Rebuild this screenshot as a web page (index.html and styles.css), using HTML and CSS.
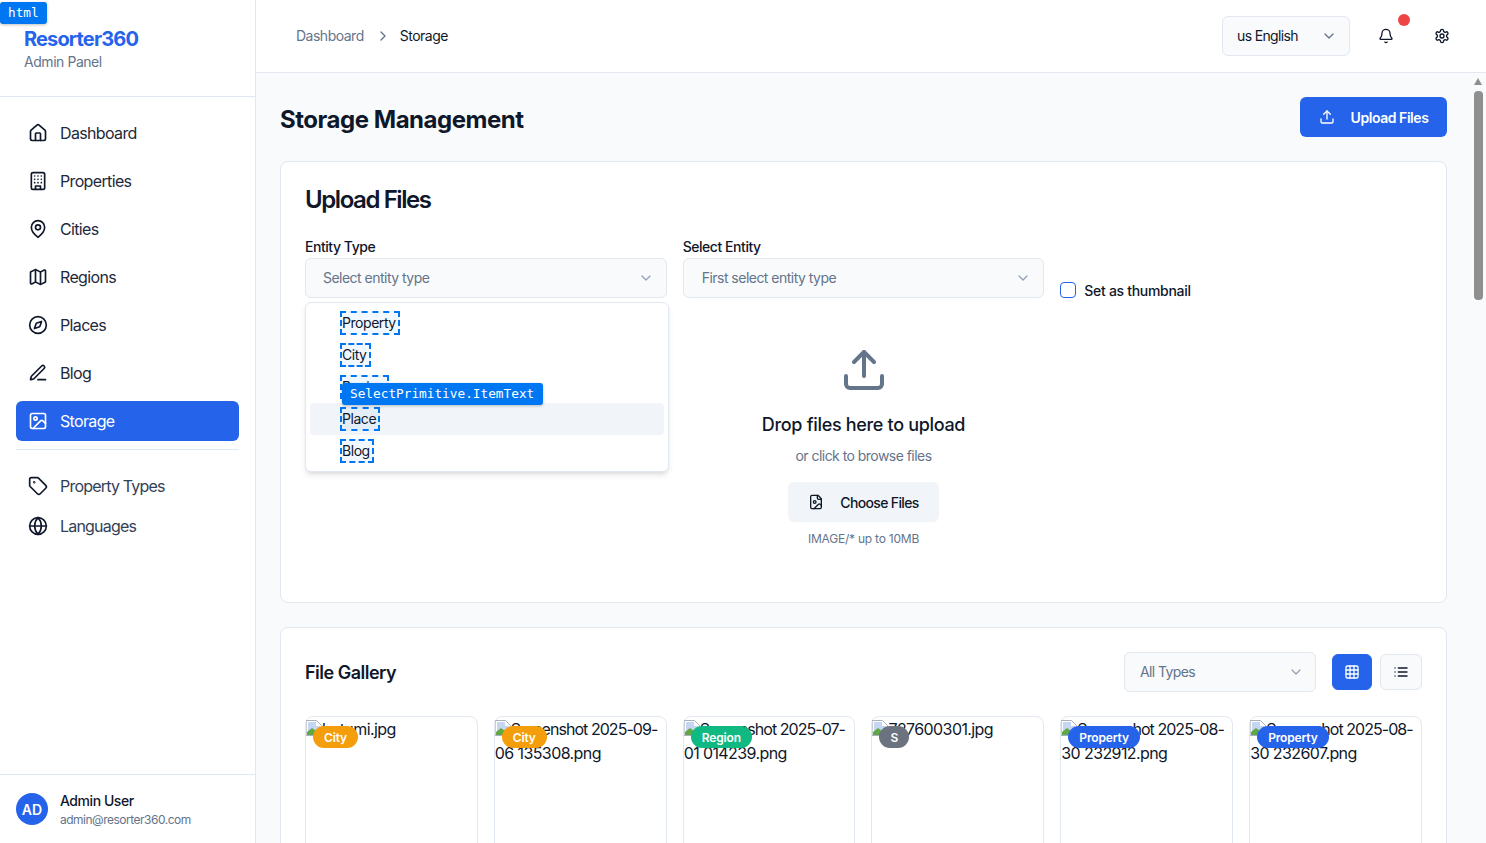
FILE: index.html
```html
<!DOCTYPE html>
<html lang="en">
<head>
    <meta charset="UTF-8">
    <meta name="viewport" content="width=device-width, initial-scale=1.0">
    <title>Storage Management</title>
    <link rel="stylesheet" href="styles.css">
</head>
<body>
    <aside class="sidebar">
        <div class="brand">
            <div class="brand-name">Resorter360</div>
            <div class="brand-sub">Admin Panel</div>
        </div>
        <nav class="nav">
            <a class="nav-item"><svg class="icon" viewBox="0 0 24 24"><path d="M15 21v-8a1 1 0 0 0-1-1h-4a1 1 0 0 0-1 1v8"/><path d="M3 10a2 2 0 0 1 .709-1.528l7-5.999a2 2 0 0 1 2.582 0l7 5.999A2 2 0 0 1 21 10v9a2 2 0 0 1-2 2H5a2 2 0 0 1-2-2z"/></svg>Dashboard</a>
            <a class="nav-item"><svg class="icon" viewBox="0 0 24 24"><rect width="16" height="20" x="4" y="2" rx="2" ry="2"/><path d="M9 22v-4h6v4"/><path d="M8 6h.01M16 6h.01M12 6h.01M12 10h.01M12 14h.01M16 10h.01M16 14h.01M8 10h.01M8 14h.01"/></svg>Properties</a>
            <a class="nav-item"><svg class="icon" viewBox="0 0 24 24"><path d="M20 10c0 6-8 12-8 12s-8-6-8-12a8 8 0 0 1 16 0Z"/><circle cx="12" cy="10" r="3"/></svg>Cities</a>
            <a class="nav-item"><svg class="icon" viewBox="0 0 24 24"><path d="M14.106 5.553a2 2 0 0 0 1.788 0l3.659-1.83A1 1 0 0 1 21 4.619v12.764a1 1 0 0 1-.553.894l-4.553 2.277a2 2 0 0 1-1.788 0l-4.212-2.106a2 2 0 0 0-1.788 0l-3.659 1.83A1 1 0 0 1 3 19.381V6.618a1 1 0 0 1 .553-.894l4.553-2.277a2 2 0 0 1 1.788 0z"/><path d="M15 5.764v15"/><path d="M9 3.236v15"/></svg>Regions</a>
            <a class="nav-item"><svg class="icon" viewBox="0 0 24 24"><path d="m16.24 7.76-1.804 5.411a2 2 0 0 1-1.265 1.265L7.76 16.24l1.804-5.411a2 2 0 0 1 1.265-1.265z"/><circle cx="12" cy="12" r="10"/></svg>Places</a>
            <a class="nav-item"><svg class="icon" viewBox="0 0 24 24"><path d="M12 20h9"/><path d="M16.376 3.622a1 1 0 0 1 3.002 3.002L7.368 18.635a2 2 0 0 1-.855.506l-2.872.838a.5.5 0 0 1-.62-.62l.838-2.872a2 2 0 0 1 .506-.854z"/></svg>Blog</a>
            <a class="nav-item active"><svg class="icon" viewBox="0 0 24 24"><rect width="18" height="18" x="3" y="3" rx="2" ry="2"/><circle cx="9" cy="9" r="2"/><path d="m21 15-3.086-3.086a2 2 0 0 0-2.828 0L6 21"/></svg>Storage</a>
            <div class="nav-divider"></div>
            <div class="nav-group">
                <a class="nav-item muted"><svg class="icon" viewBox="0 0 24 24"><path d="M12.586 2.586A2 2 0 0 0 11.172 2H4a2 2 0 0 0-2 2v7.172a2 2 0 0 0 .586 1.414l8.704 8.704a2.426 2.426 0 0 0 3.42 0l6.58-6.58a2.426 2.426 0 0 0 0-3.42z"/><circle cx="7.5" cy="7.5" r=".5"/></svg>Property Types</a>
                <a class="nav-item muted"><svg class="icon" viewBox="0 0 24 24"><circle cx="12" cy="12" r="10"/><path d="M12 2a14.5 14.5 0 0 0 0 20 14.5 14.5 0 0 0 0-20"/><path d="M2 12h20"/></svg>Languages</a>
            </div>
        </nav>
        <div class="user">
            <div class="avatar">AD</div>
            <div>
                <div class="user-name">Admin User</div>
                <div class="user-mail">admin@resorter360.com</div>
            </div>
        </div>
    </aside>

    <div class="page">
        <header class="topbar">
            <div class="crumbs">
                <span class="crumb-link">Dashboard</span>
                <svg class="icon-sm crumb-sep" viewBox="0 0 24 24"><path d="m9 18 6-6-6-6"/></svg>
                <span>Storage</span>
            </div>
            <div class="top-actions">
                <div class="lang">us English<svg class="icon-sm" viewBox="0 0 24 24"><path d="m6 9 6 6 6-6"/></svg></div>
                <div class="bell">
                    <svg class="icon-bell" viewBox="0 0 24 24"><path d="M10.268 21a2 2 0 0 0 3.464 0"/><path d="M3.262 15.326A1 1 0 0 0 4 17h16a1 1 0 0 0 .74-1.673C19.41 13.956 18 12.499 18 8A6 6 0 0 0 6 8c0 4.499-1.411 5.956-2.738 7.326"/></svg>
                    <span class="bell-dot"></span>
                </div>
                <svg class="icon-bell" viewBox="0 0 24 24"><path d="M12.22 2h-.44a2 2 0 0 0-2 2v.18a2 2 0 0 1-1 1.73l-.43.25a2 2 0 0 1-2 0l-.15-.08a2 2 0 0 0-2.73.73l-.22.38a2 2 0 0 0 .73 2.73l.15.1a2 2 0 0 1 1 1.72v.51a2 2 0 0 1-1 1.74l-.15.09a2 2 0 0 0-.73 2.73l.22.38a2 2 0 0 0 2.73.73l.15-.08a2 2 0 0 1 2 0l.43.25a2 2 0 0 1 1 1.73V20a2 2 0 0 0 2 2h.44a2 2 0 0 0 2-2v-.18a2 2 0 0 1 1-1.73l.43-.25a2 2 0 0 1 2 0l.15.08a2 2 0 0 0 2.73-.73l.22-.39a2 2 0 0 0-.73-2.73l-.15-.08a2 2 0 0 1-1-1.74v-.5a2 2 0 0 1 1-1.74l.15-.09a2 2 0 0 0 .73-2.73l-.22-.38a2 2 0 0 0-2.73-.73l-.15.08a2 2 0 0 1-2 0l-.43-.25a2 2 0 0 1-1-1.73V4a2 2 0 0 0-2-2z"/><circle cx="12" cy="12" r="3"/></svg>
            </div>
        </header>

        <main class="content">
            <div class="page-head">
                <h1>Storage Management</h1>
                <button class="btn-primary"><svg class="icon-md" viewBox="0 0 24 24"><path d="M21 15v4a2 2 0 0 1-2 2H5a2 2 0 0 1-2-2v-4"/><polyline points="17 8 12 3 7 8"/><line x1="12" x2="12" y1="3" y2="15"/></svg>Upload Files</button>
            </div>

            <section class="card upload-card">
                <h2>Upload Files</h2>
                <div class="form-row">
                    <div class="field">
                        <label>Entity Type</label>
                        <div class="select">Select entity type<svg class="icon-sm" viewBox="0 0 24 24"><path d="m6 9 6 6 6-6"/></svg></div>
                        <div class="dropdown">
                            <div class="option"><span class="outlined">Property</span></div>
                            <div class="option"><span class="outlined">City</span></div>
                            <div class="option"><span class="outlined">Region</span></div>
                            <div class="option hovered"><span class="outlined">Place</span></div>
                            <div class="option"><span class="outlined">Blog</span></div>
                            <div class="dev-tag item-tag">SelectPrimitive.ItemText</div>
                        </div>
                    </div>
                    <div class="field">
                        <label>Select Entity</label>
                        <div class="select second">First select entity type<svg class="icon-sm" viewBox="0 0 24 24"><path d="m6 9 6 6 6-6"/></svg></div>
                    </div>
                    <label class="check"><span class="checkbox"></span>Set as thumbnail</label>
                </div>
                <div class="dropzone">
                    <svg class="icon-xl" viewBox="0 0 24 24"><path d="M21 15v4a2 2 0 0 1-2 2H5a2 2 0 0 1-2-2v-4"/><polyline points="17 8 12 3 7 8"/><line x1="12" x2="12" y1="3" y2="15"/></svg>
                    <h3>Drop files here to upload</h3>
                    <p class="drop-sub">or click to browse files</p>
                    <button class="btn-soft"><svg class="icon-md" viewBox="0 0 24 24"><path d="M15 2H6a2 2 0 0 0-2 2v16a2 2 0 0 0 2 2h12a2 2 0 0 0 2-2V7Z"/><path d="M14 2v4a2 2 0 0 0 2 2h4"/><circle cx="10" cy="12" r="2"/><path d="m20 17-1.296-1.296a2.41 2.41 0 0 0-3.408 0L9 22"/></svg>Choose Files</button>
                    <p class="drop-hint">IMAGE/* up to 10MB</p>
                </div>
            </section>

            <section class="card gallery-card">
                <div class="gallery-head">
                    <h2 class="gallery-title">File Gallery</h2>
                    <div class="gallery-tools">
                        <div class="select filter">All Types<svg class="icon-sm" viewBox="0 0 24 24"><path d="m6 9 6 6 6-6"/></svg></div>
                        <button class="view-btn on"><svg class="icon-md" viewBox="0 0 24 24"><rect width="18" height="18" x="3" y="3" rx="2"/><path d="M3 9h18"/><path d="M3 15h18"/><path d="M9 3v18"/><path d="M15 3v18"/></svg></button>
                        <button class="view-btn"><svg class="icon-md" viewBox="0 0 24 24"><path d="M3 12h.01"/><path d="M3 18h.01"/><path d="M3 6h.01"/><path d="M8 12h13"/><path d="M8 18h13"/><path d="M8 6h13"/></svg></button>
                    </div>
                </div>
                <div class="file-grid">
                    <div class="file"><svg class="broken" viewBox="0 0 16 16"><path class="b-page" d="M.5.5h10l5 5v10H.5z"/><path class="b-sky" d="M2 2h8v4h4v3L9 11 2 14z"/><path class="b-grass" d="M1 15v-3l5-4 4 3 5-2v6z"/></svg>batumi.jpg<span class="badge city">City</span></div>
                    <div class="file"><svg class="broken" viewBox="0 0 16 16"><path class="b-page" d="M.5.5h10l5 5v10H.5z"/><path class="b-sky" d="M2 2h8v4h4v3L9 11 2 14z"/><path class="b-grass" d="M1 15v-3l5-4 4 3 5-2v6z"/></svg><span class="tight">Screenshot 2025-09-</span>06 135308.png<span class="badge city">City</span></div>
                    <div class="file"><svg class="broken" viewBox="0 0 16 16"><path class="b-page" d="M.5.5h10l5 5v10H.5z"/><path class="b-sky" d="M2 2h8v4h4v3L9 11 2 14z"/><path class="b-grass" d="M1 15v-3l5-4 4 3 5-2v6z"/></svg><span class="tight">Screenshot 2025-07-</span>01 014239.png<span class="badge region">Region</span></div>
                    <div class="file"><svg class="broken" viewBox="0 0 16 16"><path class="b-page" d="M.5.5h10l5 5v10H.5z"/><path class="b-sky" d="M2 2h8v4h4v3L9 11 2 14z"/><path class="b-grass" d="M1 15v-3l5-4 4 3 5-2v6z"/></svg>727600301.jpg<span class="badge other">S</span></div>
                    <div class="file"><svg class="broken" viewBox="0 0 16 16"><path class="b-page" d="M.5.5h10l5 5v10H.5z"/><path class="b-sky" d="M2 2h8v4h4v3L9 11 2 14z"/><path class="b-grass" d="M1 15v-3l5-4 4 3 5-2v6z"/></svg><span class="tight">Screenshot 2025-08-</span>30 232912.png<span class="badge property">Property</span></div>
                    <div class="file"><svg class="broken" viewBox="0 0 16 16"><path class="b-page" d="M.5.5h10l5 5v10H.5z"/><path class="b-sky" d="M2 2h8v4h4v3L9 11 2 14z"/><path class="b-grass" d="M1 15v-3l5-4 4 3 5-2v6z"/></svg><span class="tight">Screenshot 2025-08-</span>30 232607.png<span class="badge property">Property</span></div>
                </div>
            </section>
        </main>

        <div class="scrollbar">
            <span class="scroll-arrow"></span>
            <span class="scroll-thumb"></span>
        </div>
    </div>

    <div class="dev-tag html-tag">html</div>
</body>
</html>
```

FILE: styles.css
```css
* {
    box-sizing: border-box;
}
html, body {
    height: 100%;
}
body {
    margin: 0;
    display: flex;
    overflow: hidden;
    font-family: Inter, "Noto Sans", sans-serif;
    font-size: 14px;
    letter-spacing: -0.45px;
    color: #0f172a;
    background-color: #f8fafc;
}
svg {
    fill: none;
    stroke: currentColor;
    stroke-width: 2;
    stroke-linecap: round;
    stroke-linejoin: round;
    flex-shrink: 0;
}
button {
    font-family: inherit;
    letter-spacing: inherit;
    border: none;
}

/* sidebar */
.sidebar {
    width: 256px;
    flex-shrink: 0;
    display: flex;
    flex-direction: column;
    background-color: white;
    border-right: 1px solid #e2e8f0;
}
.brand {
    height: 97px;
    padding: 27px 24px 0;
    border-bottom: 1px solid #e2e8f0;
}
.brand-name {
    font-size: 20px;
    line-height: 25px;
    font-weight: 700;
    letter-spacing: -0.85px;
    color: #2563eb;
}
.brand-sub {
    font-size: 14px;
    line-height: 20px;
    color: #64748b;
}
.nav {
    flex: 1;
    padding: 16px;
    display: flex;
    flex-direction: column;
    gap: 8px;
}
.nav-item {
    height: 40px;
    display: flex;
    align-items: center;
    gap: 12px;
    padding: 0 12px;
    border-radius: 6px;
    font-size: 16px;
    letter-spacing: -0.65px;
    color: #1e293b;
}
.nav-item .icon {
    width: 20px;
    height: 20px;
    color: #0f172a;
}
.nav-item.active {
    background-color: #2563eb;
    color: white;
}
.nav-item.active .icon {
    color: white;
}
.nav-item.muted {
    letter-spacing: -0.8px;
    color: #334155;
}
.nav-divider {
    height: 1px;
    background-color: #e2e8f0;
    margin-bottom: 8px;
}
.user {
    height: 69px;
    border-top: 1px solid #e2e8f0;
    padding: 0 16px;
    display: flex;
    align-items: center;
    gap: 12px;
}
.avatar {
    width: 32px;
    height: 32px;
    border-radius: 50%;
    background-color: #2563eb;
    color: white;
    font-weight: 600;
    letter-spacing: 0;
    display: flex;
    align-items: center;
    justify-content: center;
}
.user-name {
    font-size: 14px;
    line-height: 20px;
    font-weight: 500;
}
.user-mail {
    margin-top: 1px;
    font-size: 12px;
    line-height: 16px;
    letter-spacing: -0.5px;
    color: #64748b;
}

/* top bar */
.page {
    flex: 1;
    min-width: 0;
    position: relative;
    display: flex;
    flex-direction: column;
}
.topbar {
    height: 73px;
    flex-shrink: 0;
    display: flex;
    align-items: center;
    justify-content: space-between;
    padding: 0 36px 0 40px;
    background-color: white;
    border-bottom: 1px solid #e2e8f0;
}
.crumbs {
    display: flex;
    align-items: center;
    gap: 8px;
    padding-bottom: 2px;
    font-size: 14px;
    letter-spacing: -0.5px;
}
.crumb-link {
    color: #64748b;
}
.crumb-sep {
    margin: 2px 1px 0 3px;
    color: #64748b;
}
.icon-sm {
    width: 16px;
    height: 16px;
    stroke-width: 2;
}
.top-actions {
    display: flex;
    align-items: center;
    gap: 28px;
}
.lang {
    width: 128px;
    height: 40px;
    padding: 0 14px 2px;
    display: flex;
    align-items: center;
    justify-content: space-between;
    background-color: #f8fafc;
    border: 1px solid #e2e8f0;
    border-radius: 6px;
    letter-spacing: -0.65px;
}
.lang .icon-sm {
    margin-right: -2px;
    margin-top: 2px;
    color: #64748b;
}
.bell {
    position: relative;
    display: flex;
    margin-right: 12px;
}
.icon-bell {
    width: 16px;
    height: 16px;
}
.bell-dot {
    position: absolute;
    top: -14px;
    right: -16px;
    width: 12px;
    height: 12px;
    border-radius: 50%;
    background-color: #ef4444;
}

/* main content */
.content {
    flex: 1;
    overflow: hidden;
    padding: 24px 39px 0 24px;
}
.page-head {
    display: flex;
    align-items: center;
    justify-content: space-between;
    height: 40px;
    margin-bottom: 24px;
}
h1 {
    margin: 4px 0 0;
    font-size: 24px;
    font-weight: 700;
    letter-spacing: -0.47px;
}
.btn-primary {
    height: 40px;
    width: 147px;
    display: flex;
    align-items: center;
    justify-content: center;
    gap: 16px;
    background-color: #2563eb;
    color: white;
    font-size: 14px;
    font-weight: 600;
    border-radius: 6px;
}
.icon-md {
    width: 16px;
    height: 16px;
}
.card {
    background-color: white;
    border: 1px solid #e2e8f0;
    border-radius: 8px;
    padding: 24px;
}
.upload-card {
    height: 442px;
    margin-bottom: 24px;
}
h2 {
    margin: 0;
    font-size: 24px;
    line-height: 28px;
    font-weight: 600;
    letter-spacing: -1.42px;
}
.form-row {
    display: grid;
    grid-template-columns: repeat(3, 1fr);
    gap: 16px;
    margin-top: 23px;
    align-items: end;
}
.field {
    position: relative;
    display: flex;
    flex-direction: column;
    gap: 1px;
}
.field label {
    font-size: 14px;
    line-height: 20px;
    font-weight: 500;
}
.select {
    height: 40px;
    padding: 0 17px 2px;
    display: flex;
    align-items: center;
    justify-content: space-between;
    background-color: #f8fafc;
    border: 1px solid #e2e8f0;
    border-radius: 6px;
    letter-spacing: -0.52px;
    color: #64748b;
}
.select .icon-sm {
    color: #94a3b8;
    margin-right: -5px;
    margin-top: 2px;
}
.select.second {
    padding-left: 18px;
}
.check {
    display: flex;
    align-items: center;
    gap: 8px;
    font-weight: 500;
    letter-spacing: -0.3px;
    height: 16px;
}
.check .checkbox {
    width: 16px;
    height: 16px;
    border: 1px solid #2563eb;
    border-radius: 4px;
}

/* open select list */
.dropdown {
    position: absolute;
    top: 65px;
    left: 0;
    width: 364px;
    height: 170px;
    padding: 4px;
    z-index: 5;
    background-color: white;
    border: 1px solid #e2e8f0;
    border-radius: 6px;
    box-shadow: 0 4px 6px -1px rgba(0, 0, 0, 0.1), 0 2px 4px -2px rgba(0, 0, 0, 0.1);
}
.option {
    height: 32px;
    padding-left: 30px;
    display: flex;
    align-items: center;
    border-radius: 4px;
}
.option.hovered {
    background-color: #f1f5f9;
}
.outlined {
    padding: 2px 4px 2px 2px;
    line-height: 20px;
    background-color: rgba(0, 120, 255, 0.05);
    outline: 2px dashed #0077f2;
    outline-offset: -2px;
}
.dev-tag {
    position: absolute;
    z-index: 10;
    height: 22px;
    padding: 0 8px;
    line-height: 22px;
    font-family: "DejaVu Sans Mono", monospace;
    font-size: 12.75px;
    letter-spacing: 0;
    color: white;
    background-color: #0077f2;
    border-radius: 3px;
    box-shadow: 0 1px 3px rgba(0, 0, 0, 0.25);
}
.item-tag {
    top: 80px;
    left: 36px;
    width: 201px;
}
.html-tag {
    top: 2px;
    left: 0;
    width: 47px;
}

/* drop zone */
.dropzone {
    display: flex;
    flex-direction: column;
    align-items: center;
    margin-top: 48px;
}
.icon-xl {
    width: 48px;
    height: 48px;
    color: #64748b;
}
h3 {
    margin: 17px 0 0;
    font-size: 18px;
    line-height: 28px;
    font-weight: 500;
    letter-spacing: -0.32px;
}
.drop-sub {
    margin: 7px 0 0;
    color: #64748b;
    line-height: 20px;
    font-size: 14px;
    letter-spacing: -0.54px;
}
.btn-soft {
    margin-top: 16px;
    height: 40px;
    width: 151px;
    display: flex;
    align-items: center;
    justify-content: center;
    gap: 16px;
    background-color: #f1f5f9;
    color: #0f172a;
    font-size: 14px;
    font-weight: 500;
    letter-spacing: -0.65px;
    border-radius: 6px;
}
.drop-hint {
    margin: 9px 0 0;
    font-size: 12px;
    line-height: 16px;
    letter-spacing: -0.22px;
    color: #64748b;
}

/* gallery */
.gallery-card {
    height: 400px;
}
.gallery-head {
    display: flex;
    align-items: center;
    justify-content: space-between;
    height: 40px;
    margin-bottom: 24px;
}
.gallery-title {
    margin-top: 2px;
    font-size: 18px;
    letter-spacing: -0.5px;
}
.gallery-tools {
    display: flex;
    align-items: center;
    gap: 8px;
}
.filter {
    width: 192px;
    padding: 0 16px 2px 15px;
    margin-right: 8px;
    letter-spacing: -0.6px;
}
.view-btn {
    width: 42px;
    height: 36px;
    display: flex;
    align-items: center;
    justify-content: center;
    background-color: #f8fafc;
    border: 1px solid #e2e8f0;
    border-radius: 6px;
    color: #0f172a;
}
.view-btn.on {
    width: 40px;
    background-color: #2563eb;
    border-color: #2563eb;
    color: white;
}
.file-grid {
    display: grid;
    grid-template-columns: repeat(6, 1fr);
    gap: 16px;
}
.file {
    position: relative;
    height: 200px;
    background-color: white;
    border: 1px solid #e2e8f0;
    border-radius: 8px;
    font-size: 16px;
    line-height: 24px;
    letter-spacing: -0.6px;
}
.tight {
    letter-spacing: -0.95px;
}
.broken {
    width: 16px;
    height: 16px;
    stroke: none;
    vertical-align: -1px;
    margin-top: -1px;
}
.b-page {
    fill: white;
    stroke: #a8b0bd;
    stroke-width: 1;
}
.b-sky {
    fill: #c5d6f2;
}
.b-grass {
    fill: #5fa845;
}
.badge {
    position: absolute;
    top: 9px;
    left: 7px;
    height: 22px;
    padding: 0 11px;
    line-height: 24px;
    font-size: 12px;
    font-weight: 600;
    letter-spacing: -0.15px;
    color: white;
    border-radius: 11px;
}
.badge.city {
    background-color: #f59e0b;
}
.badge.region {
    background-color: #10b981;
}
.badge.other {
    background-color: #6b7280;
}
.badge.property {
    background-color: #2563eb;
}

/* scrollbar drawn over the right edge */
.scrollbar {
    position: absolute;
    top: 73px;
    right: 0;
    bottom: 0;
    width: 15px;
    background-color: #f8fafc;
}
.scroll-arrow {
    position: absolute;
    top: 5px;
    left: 3px;
    border-left: 4px solid transparent;
    border-right: 4px solid transparent;
    border-bottom: 7px solid #8f8f8f;
}
.scroll-thumb {
    position: absolute;
    top: 18px;
    left: 3px;
    width: 9px;
    height: 209px;
    border-radius: 4px;
    background-color: #8f8f8f;
}
```
